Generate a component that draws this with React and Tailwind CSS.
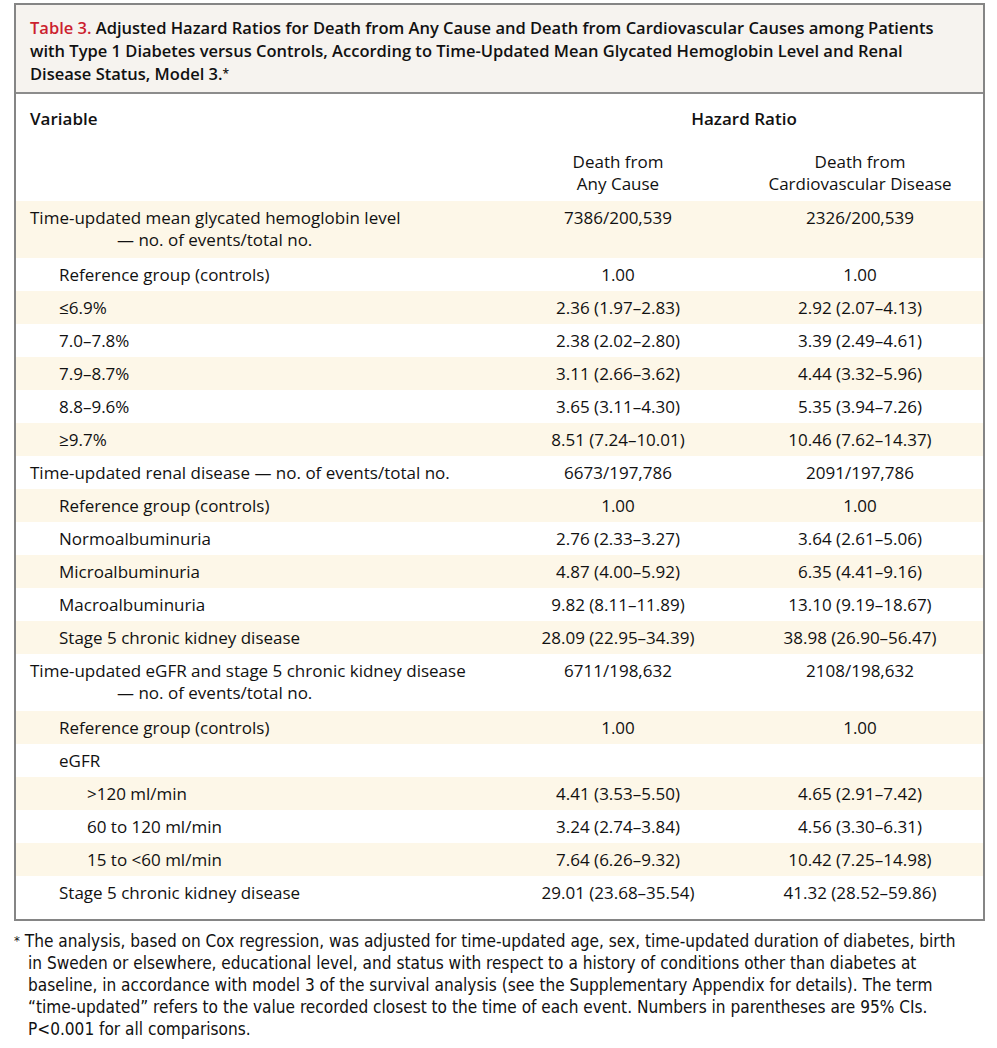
import React from 'react';

const rows = [
  { label: 'Time-updated mean glycated hemoglobin level', sub: '— no. of events/total no.', a: '7386/200,539', b: '2326/200,539', level: 0 },
  { label: 'Reference group (controls)', a: '1.00', b: '1.00', level: 1 },
  { label: '≤6.9%', a: '2.36 (1.97–2.83)', b: '2.92 (2.07–4.13)', level: 1 },
  { label: '7.0–7.8%', a: '2.38 (2.02–2.80)', b: '3.39 (2.49–4.61)', level: 1 },
  { label: '7.9–8.7%', a: '3.11 (2.66–3.62)', b: '4.44 (3.32–5.96)', level: 1 },
  { label: '8.8–9.6%', a: '3.65 (3.11–4.30)', b: '5.35 (3.94–7.26)', level: 1 },
  { label: '≥9.7%', a: '8.51 (7.24–10.01)', b: '10.46 (7.62–14.37)', level: 1 },
  { label: 'Time-updated renal disease — no. of events/total no.', a: '6673/197,786', b: '2091/197,786', level: 0 },
  { label: 'Reference group (controls)', a: '1.00', b: '1.00', level: 1 },
  { label: 'Normoalbuminuria', a: '2.76 (2.33–3.27)', b: '3.64 (2.61–5.06)', level: 1 },
  { label: 'Microalbuminuria', a: '4.87 (4.00–5.92)', b: '6.35 (4.41–9.16)', level: 1 },
  { label: 'Macroalbuminuria', a: '9.82 (8.11–11.89)', b: '13.10 (9.19–18.67)', level: 1 },
  { label: 'Stage 5 chronic kidney disease', a: '28.09 (22.95–34.39)', b: '38.98 (26.90–56.47)', level: 1 },
  { label: 'Time-updated eGFR and stage 5 chronic kidney disease', sub: '— no. of events/total no.', a: '6711/198,632', b: '2108/198,632', level: 0 },
  { label: 'Reference group (controls)', a: '1.00', b: '1.00', level: 1 },
  { label: 'eGFR', a: '', b: '', level: 1 },
  { label: '>120 ml/min', a: '4.41 (3.53–5.50)', b: '4.65 (2.91–7.42)', level: 2 },
  { label: '60 to 120 ml/min', a: '3.24 (2.74–3.84)', b: '4.56 (3.30–6.31)', level: 2 },
  { label: '15 to <60 ml/min', a: '7.64 (6.26–9.32)', b: '10.42 (7.25–14.98)', level: 2 },
  { label: 'Stage 5 chronic kidney disease', a: '29.01 (23.68–35.54)', b: '41.32 (28.52–59.86)', level: 1 },
];

const indent = ['pl-[14px]', 'pl-[43px]', 'pl-[71px]'];

function Row({ row, shaded }) {
  return (
    <div className={`flex ${row.sub ? 'h-[57px] items-start pt-[6px]' : 'h-[33px] items-center'} ${shaded ? 'bg-[#fdf7e8]' : ''}`}>
      <div className={`w-[481px] whitespace-nowrap ${indent[row.level]}`}>
        <div>{row.label}</div>
        {row.sub && <div className="pl-[87px]">{row.sub}</div>}
      </div>
      <div className="w-[242px] text-center whitespace-nowrap">{row.a}</div>
      <div className="w-[242px] text-center whitespace-nowrap">{row.b}</div>
    </div>
  );
}

export default function App() {
  return (
    <div className="bg-white min-h-[1048px] pt-[3px] text-[#111] font-['Open_Sans',sans-serif] text-[17px] leading-[22px]">
      <div className="ml-[14px] w-[971px] border-2 border-[#858585]">
        <div className="bg-[#f6f3ef] px-[14px] pt-[11px] pb-[7px] border-b-2 border-[#8c8c8c] font-semibold text-[16.5px] leading-[23px] whitespace-nowrap">
          <span className="text-[#cc1f2f]">Table 3.</span> Adjusted Hazard Ratios for Death from Any Cause and Death from Cardiovascular Causes among Patients<br />
          with Type 1 Diabetes versus Controls, According to Time-Updated Mean Glycated Hemoglobin Level and Renal<br />
          Disease Status, Model 3.<span className="text-[12px] align-top">*</span>
        </div>
        <div className="pt-[14px] pb-[6px]">
          <div className="flex">
            <div className="w-[481px] pl-[14px] font-semibold">Variable</div>
            <div className="w-[484px] text-center font-semibold pl-[10px]">Hazard Ratio</div>
          </div>
          <div className="flex mt-[21px]">
            <div className="w-[481px]"></div>
            <div className="w-[242px] text-center">Death from<br />Any Cause</div>
            <div className="w-[242px] text-center">Death from<br />Cardiovascular Disease</div>
          </div>
        </div>
        <div className="pb-[10px]">
          {rows.map((r, i) => (
            <Row key={i} row={r} shaded={i % 2 === 0} />
          ))}
        </div>
      </div>
      <div className="ml-[14px] mt-[9px] w-[975px] pl-[14px] -indent-[14px] whitespace-nowrap font-['Liberation_Sans_Narrow','DejaVu_Sans_Condensed',sans-serif] text-[17.1px] leading-[22px]">
        <span className="text-[13px] align-top">*</span> The analysis, based on Cox regression, was adjusted for time-updated age, sex, time-updated duration of diabetes, birth<br />
        in Sweden or elsewhere, educational level, and status with respect to a history of conditions other than diabetes at<br />
        baseline, in accordance with model 3 of the survival analysis (see the Supplementary Appendix for details). The term<br />
        “time-updated” refers to the value recorded closest to the time of each event. Numbers in parentheses are 95% CIs.<br />
        P&lt;0.001 for all comparisons.
      </div>
    </div>
  );
}
